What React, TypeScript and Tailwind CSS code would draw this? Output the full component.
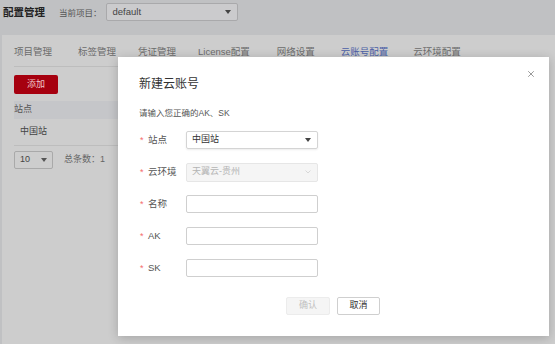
import { X } from "lucide-react";

const font = { fontFamily: '"Liberation Sans", "Noto Sans CJK SC", sans-serif' };

const tabs = [
  { label: "项目管理", ml: "ml-0" },
  { label: "标签管理", ml: "ml-[26px]" },
  { label: "凭证管理", ml: "ml-[22px]" },
  { label: "License配置", ml: "ml-[22px]" },
  { label: "网络设置", ml: "ml-[27px]" },
  { label: "云账号配置", ml: "ml-[26px]", active: true },
  { label: "云环境配置", ml: "ml-[25px]" },
];

function Caret({ color = "#555" }: { color?: string }) {
  return (
    <svg width="6" height="4" viewBox="0 0 6 4">
      <path d="M0 0 L6 0 L3 4 Z" fill={color} />
    </svg>
  );
}

function Field({ label, children }: { label: string; children: React.ReactNode }) {
  return (
    <div className="flex h-[18px] items-center pl-[22px]">
      <span className="w-[8px] text-[9px] leading-none text-[#f56c6c]">*</span>
      <span className="w-[38px] text-[9.5px] text-[#555]">{label}</span>
      {children}
    </div>
  );
}

export default function App() {
  return (
    <div className="relative h-[344px] w-[555px] overflow-hidden bg-[#c0c1c3]" style={font}>
      {/* Header */}
      <div className="flex h-[35px] items-start pt-[3px]">
        <span className="ml-[3px] mt-[2px] text-[10.5px] font-bold text-[#222]">配置管理</span>
        <span className="ml-[14px] mt-[4px] text-[8.5px] text-[#555]">当前项目：</span>
        <div className="ml-[4px] flex h-[18px] w-[132px] items-center justify-between rounded-[2px] border border-[#a9a9ab] bg-[#cbcbcd] pl-[6px] pr-[6px]">
          <span className="text-[9.5px] text-[#444]">default</span>
          <Caret color="#444" />
        </div>
      </div>

      {/* Content card */}
      <div className="ml-[2px] h-[309px] bg-[#cdcdcd] px-[12px]">
        <div className="flex h-[32px] items-center border-b border-[#bdbdbd] pt-[4px]">
          {tabs.map((t) => (
            <span
              key={t.label}
              className={`${t.ml} text-[9.5px] ${t.active ? "text-[#4b5fa6]" : "text-[#6b6b6b]"}`}
            >
              {t.label}
            </span>
          ))}
        </div>
        <button className="mt-[8px] flex h-[19px] w-[44px] items-center justify-center rounded-[2px] bg-[#a6000f] text-[9px] text-[#f0c8cc]">
          添加
        </button>
        <div className="mt-[7px] flex h-[18px] items-center bg-[#c5c6c9] text-[9px] text-[#555]">站点</div>
        <div className="flex h-[27px] items-center border-b border-[#bdbdbd] pl-[6px] text-[9px] text-[#444]">中国站</div>
        <div className="mt-[5px] flex items-center">
          <div className="flex h-[18px] w-[39px] items-center justify-between rounded-[2px] border border-[#a9a9a9] px-[5px]">
            <span className="text-[9px] text-[#444]">10</span>
            <Caret color="#555" />
          </div>
          <span className="ml-[11px] text-[9px] text-[#666]">总条数：1</span>
        </div>
      </div>

      {/* Modal */}
      <div className="absolute left-[118px] top-[57px] h-[279px] w-[431px] bg-white shadow-[0_2px_10px_rgba(0,0,0,0.2)]">
        <button className="absolute right-[13px] top-[12px] text-[#666]">
          <X size={10} strokeWidth={1.6} />
        </button>
        <div className="pl-[21px] pt-[20px] text-[12px] leading-[14px] text-[#333]">新建云账号</div>
        <div className="mt-[16px] pl-[21px] text-[8.5px] leading-[12px] text-[#555]">请输入您正确的AK、SK</div>
        <div className="mt-[12px] flex flex-col gap-[14px]">
          <Field label="站点">
            <div className="flex h-[18px] w-[132px] items-center justify-between rounded-[2px] border border-[#d4d4d4] pl-[5px] pr-[6px] shadow-[0_1px_2px_rgba(0,0,0,0.08)]">
              <span className="text-[9px] text-[#333]">中国站</span>
              <Caret color="#444" />
            </div>
          </Field>
          <Field label="云环境">
            <div className="flex h-[19px] w-[132px] items-center justify-between rounded-[2px] border border-[#e6e6e6] bg-[#f5f5f5] pl-[5px] pr-[6px]">
              <span className="text-[9px] text-[#b4b4b4]">天翼云-贵州</span>
              <svg width="6" height="4" viewBox="0 0 6 4">
                <path d="M0.5 0.5 L3 3 L5.5 0.5" fill="none" stroke="#d0d0d0" strokeWidth="0.8" />
              </svg>
            </div>
          </Field>
          <Field label="名称">
            <div className="h-[18px] w-[132px] rounded-[2px] border border-[#cfcfcf]" />
          </Field>
          <Field label="AK">
            <div className="h-[18px] w-[132px] rounded-[2px] border border-[#cfcfcf]" />
          </Field>
          <Field label="SK">
            <div className="h-[18px] w-[132px] rounded-[2px] border border-[#cfcfcf]" />
          </Field>
        </div>
        <div className="mt-[20px] flex gap-[7px] pl-[168px]">
          <button className="flex h-[18px] w-[44px] items-center justify-center rounded-[2px] border border-[#ececec] bg-[#f5f5f5] text-[9px] text-[#c0c0c0]">
            确认
          </button>
          <button className="flex h-[18px] w-[43px] items-center justify-center rounded-[2px] border border-[#cfcfcf] bg-white text-[9px] text-[#333]">
            取消
          </button>
        </div>
      </div>
    </div>
  );
}
